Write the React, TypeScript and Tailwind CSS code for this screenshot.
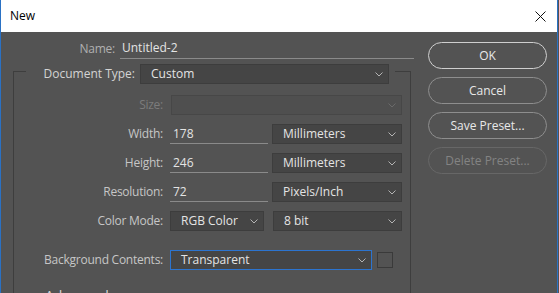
import React from 'react';

function Chevron({ color = '#b4b4b4' }: { color?: string }) {
  return (
    <svg width="8" height="5" viewBox="0 0 8 5" className="shrink-0">
      <path d="M0.5 0.5L4 4L7.5 0.5" stroke={color} fill="none" strokeWidth="1" />
    </svg>
  );
}

interface SelectProps {
  value?: string;
  className?: string;
  disabled?: boolean;
  focused?: boolean;
}

function Select({ value = '', className = '', disabled, focused }: SelectProps) {
  const frame = focused
    ? 'border-[#2c74cf] bg-[#454545]'
    : disabled
      ? 'border-[#474747] bg-[#4f4f4f]'
      : 'border-[#3d3d3d] bg-[#454545]';
  return (
    <div
      className={`h-[20px] flex items-center justify-between border pl-[10px] pr-[5px] text-[#e4e4e4] ${frame} ${className}`}
    >
      <span>{value}</span>
      <Chevron color={disabled ? '#6a6a6a' : '#b4b4b4'} />
    </div>
  );
}

function TextField({ value, className = '' }: { value: string; className?: string }) {
  return (
    <div className={`h-[20px] flex items-center border-b border-[#8a8a8a] pl-[3px] text-[#e4e4e4] ${className}`}>
      {value}
    </div>
  );
}

function Row({ label, dim, children, className = '' }: { label: string; dim?: boolean; children: React.ReactNode; className?: string }) {
  return (
    <div className={`flex items-center h-[20px] ${className}`}>
      <div className={`w-[149px] text-right tracking-[-0.25px] ${dim ? 'text-[#7c7c7c]' : 'text-[#c6c6c6]'}`}>{label}</div>
      {children}
    </div>
  );
}

function Button({ label, primary, disabled }: { label: string; primary?: boolean; disabled?: boolean }) {
  const tone = disabled
    ? 'border-[#676767] text-[#838383]'
    : primary
      ? 'border-[#cfcfcf] text-[#e8e8e8]'
      : 'border-[#8e8e8e] text-[#e8e8e8]';
  return (
    <div className={`w-[119px] h-[27px] rounded-full border flex items-center justify-center ${tone}`}>{label}</div>
  );
}

export default function App() {
  return (
    <div className="w-[559px] h-[293px] overflow-hidden bg-[#535353] text-[12px] leading-none font-['Open_Sans',sans-serif]">
      <div className="h-full w-[558px] border-l border-r border-[#2a71c4] flex flex-col">
        {/* Title bar */}
        <div className="h-8 shrink-0 bg-white flex items-center justify-between pl-[9px] pr-[11px] text-black">
          <span>New</span>
          <svg width="11" height="11" viewBox="0 0 11 11">
            <path d="M0.5 0.5L10.5 10.5M10.5 0.5L0.5 10.5" stroke="#111" strokeWidth="1" />
          </svg>
        </div>

        <div className="flex flex-1 min-h-0">
          {/* Form */}
          <div className="w-[427px] flex flex-col">
            <div className="flex items-center mt-[6px] h-[21px]">
              <div className="w-[114px] text-right tracking-[-0.25px] text-[#b0b0b0]">Name:</div>
              <div className="ml-[5px] w-[294px] h-[21px] flex items-center border-b border-[#8a8a8a] pl-[2px] text-[#e4e4e4]">
                Untitled-2
              </div>
            </div>

            <div className="ml-[12px] mt-[12px] w-[398px] flex-1 border border-b-0 border-[#3e3e3e] flex flex-col">
              {/* Legend */}
              <div className="-mt-[8px] ml-[12px] w-[369px] bg-[#535353] flex items-center">
                <div className="w-[109px] text-right text-[#d4d4d4]">Document Type:</div>
                <Select value="Custom" className="ml-[5px] w-[249px]" />
              </div>

              <Row label="Size:" dim className="mt-[11px]">
                <Select disabled className="ml-[8px] w-[231px]" />
              </Row>
              <Row label="Width:" className="mt-[9px]">
                <TextField value="178" className="ml-[7px] w-[98px]" />
                <Select value="Millimeters" className="ml-[4px] w-[130px]" />
              </Row>
              <Row label="Height:" className="mt-[9px]">
                <TextField value="246" className="ml-[7px] w-[98px]" />
                <Select value="Millimeters" className="ml-[4px] w-[130px]" />
              </Row>
              <Row label="Resolution:" className="mt-[9px]">
                <TextField value="72" className="ml-[7px] w-[98px]" />
                <Select value="Pixels/Inch" className="ml-[4px] w-[130px]" />
              </Row>
              <Row label="Color Mode:" className="mt-[9px]">
                <Select value="RGB Color" className="ml-[7px] w-[94px]" />
                <Select value="8 bit" className="ml-[9px] w-[129px]" />
              </Row>
              <Row label="Background Contents:" className="mt-[19px]">
                <Select value="Transparent" focused className="ml-[7px] w-[202px]" />
                <div className="ml-[5px] w-[16px] h-[16px] border border-[#3a3a3a]" />
              </Row>

              <div className="mt-[17px] pl-[31px] text-[14px] leading-[18px] text-[#d8d8d8]">Advanced</div>
            </div>
          </div>

          {/* Buttons */}
          <div className="flex flex-col gap-2 pt-[10px]">
            <Button label="OK" primary />
            <Button label="Cancel" />
            <Button label="Save Preset..." />
            <Button label="Delete Preset..." disabled />
          </div>
        </div>
      </div>
    </div>
  );
}
